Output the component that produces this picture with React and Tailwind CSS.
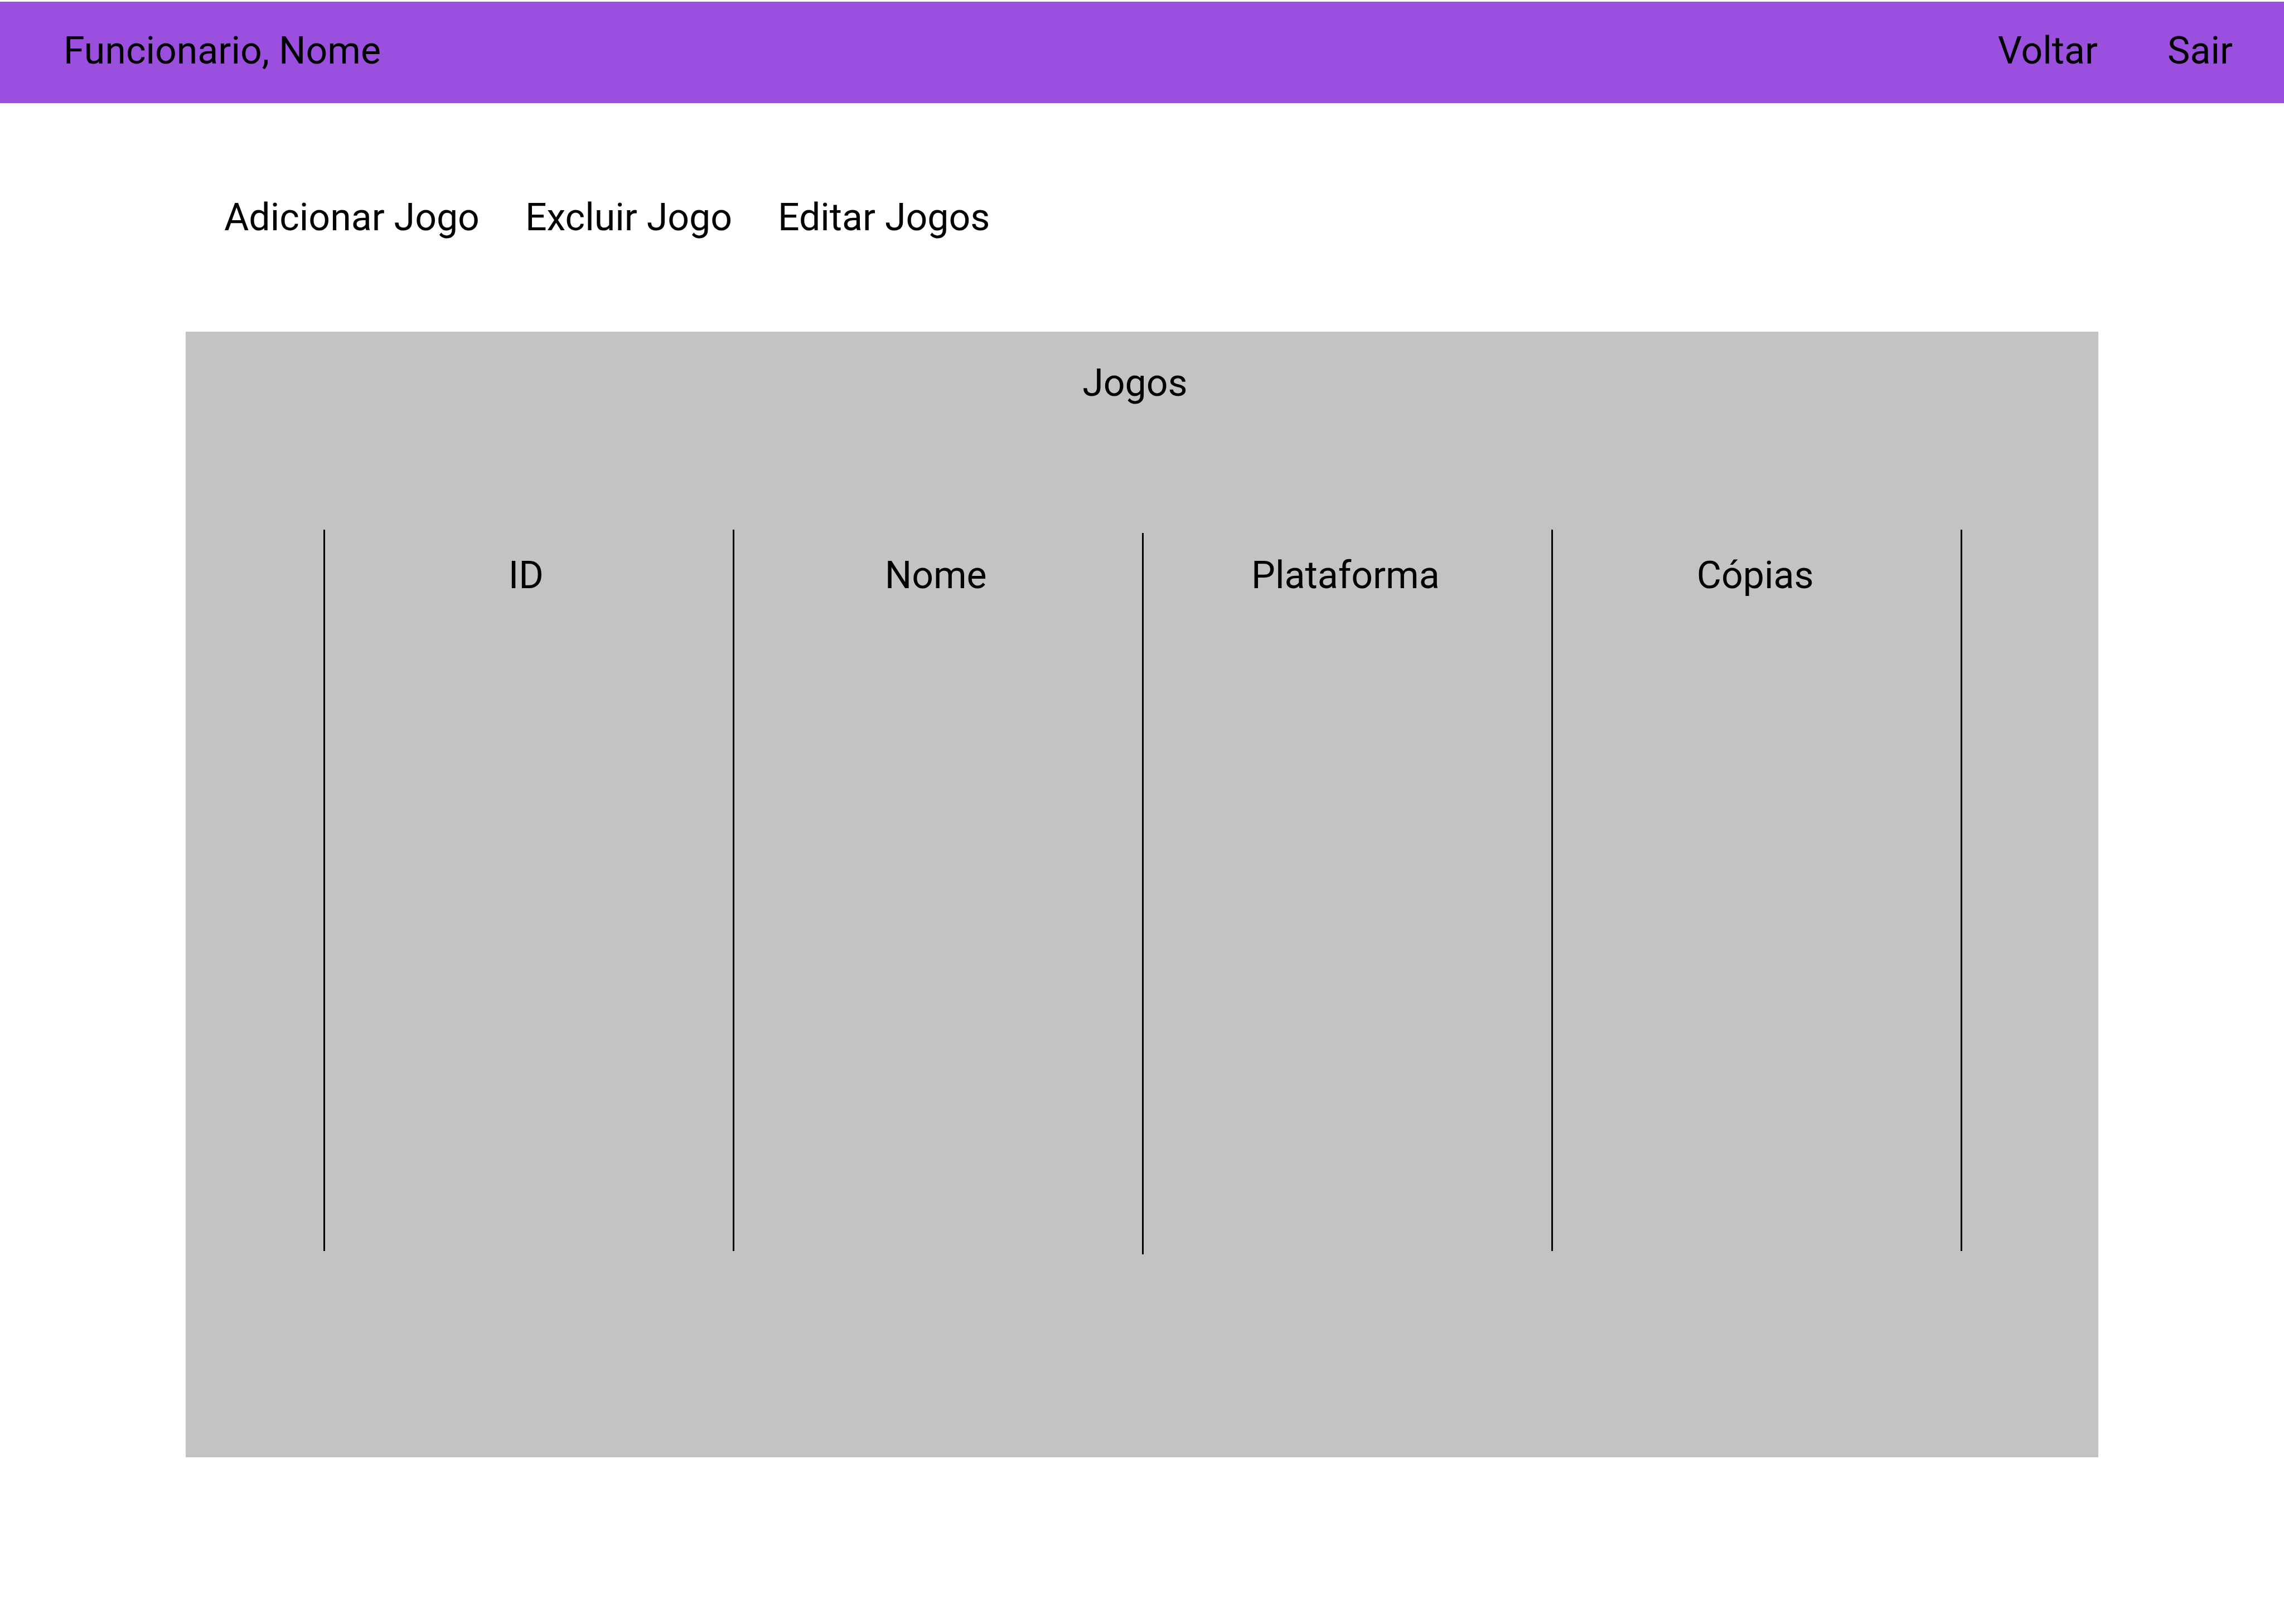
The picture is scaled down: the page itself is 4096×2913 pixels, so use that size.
const actions = ["Adicionar Jogo", "Excluir Jogo", "Editar Jogos"];
const columns = ["ID", "Nome", "Plataforma", "Cópias"];

// Vertical rules between the table columns; the middle one hangs slightly lower.
const dividers = ["self-start", "self-start", "self-end", "self-start", "self-start"];

function Header() {
  return (
    <header className="flex items-center justify-between bg-[#9a4fde] pt-12 pr-[92px] pb-[54px] pl-[114px]">
      <p>Funcionario, Nome</p>
      <nav className="flex gap-[125px]">
        <a href="#voltar">Voltar</a>
        <a href="#sair">Sair</a>
      </nav>
    </header>
  );
}

function Actions() {
  return (
    <div className="flex gap-[82px] px-[402px] py-[165px]">
      {actions.map((label) => (
        <button key={label} type="button" className="cursor-pointer">
          {label}
        </button>
      ))}
    </div>
  );
}

function GamesPanel() {
  return (
    <section className="mx-[333px] bg-[#c3c3c3] pt-[52px] pr-[244px] pb-[364px] pl-[247px]">
      <h1 id="games-title" className="pr-7 text-center">
        Jogos
      </h1>
      <div className="relative mt-[223px] min-h-[1300px]">
        <div aria-hidden="true" className="pointer-events-none absolute inset-0 flex justify-between">
          {dividers.map((align, i) => (
            <span key={i} className={`h-[1294px] w-[3px] bg-black ${align}`} />
          ))}
        </div>
        <table aria-labelledby="games-title" className="w-full table-fixed">
          <thead>
            <tr>
              {columns.map((name) => (
                <th key={name} scope="col" className="pt-[42px] pr-2 text-center font-normal">
                  {name}
                </th>
              ))}
            </tr>
          </thead>
          <tbody />
        </table>
      </div>
    </section>
  );
}

export default function App() {
  return (
    <div className="min-h-screen bg-white pt-[3px] font-['Roboto',sans-serif] text-[68px] leading-[80px] text-black">
      <Header />
      <main>
        <Actions />
        <GamesPanel />
      </main>
    </div>
  );
}
